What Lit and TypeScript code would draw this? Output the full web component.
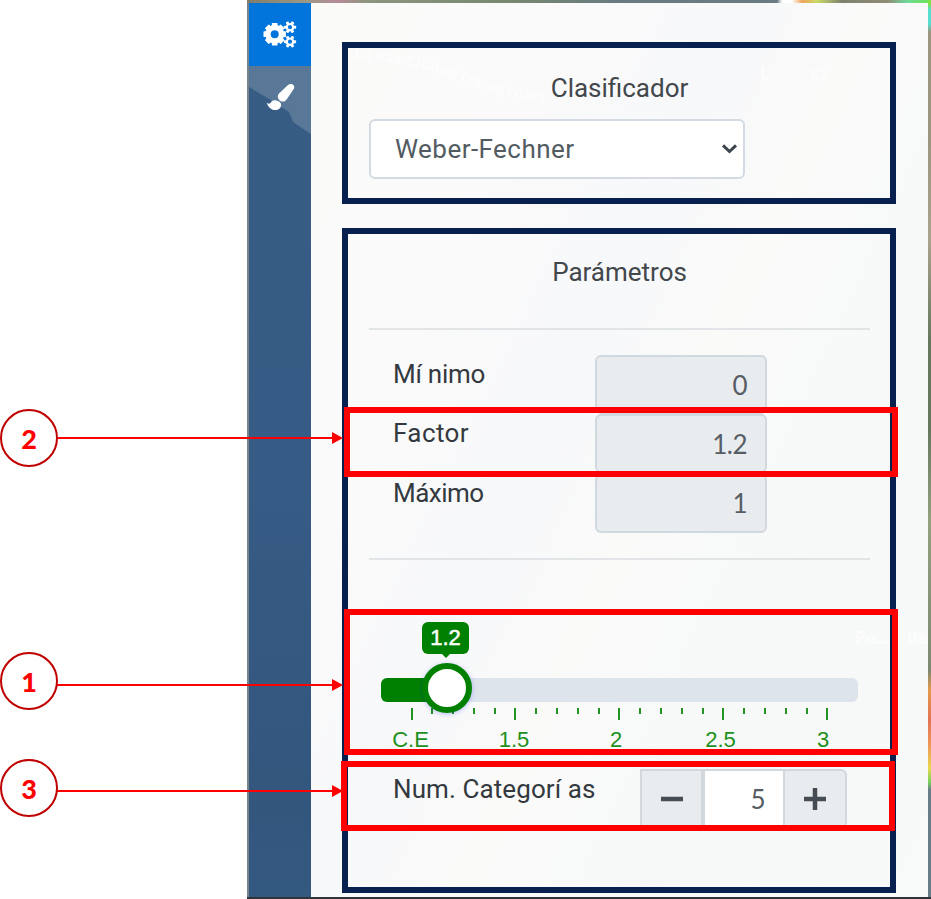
import { LitElement, html, svg, css } from "lit";
import { customElement } from "lit/decorators.js";
import { classMap } from "lit/directives/class-map.js";
import { styleMap } from "lit/directives/style-map.js";

const rows = [
  { label: "Mí nimo", value: "0", spacing: "-.25px" },
  { label: "Factor", value: "1.2", spacing: ".4px" },
  { label: "Máximo", value: "1", spacing: "-.5px" },
];
const ticks = Array.from({ length: 21 }, (_, i) => i);
const tickLabels = [
  { text: "C.E", x: 29.5 },
  { text: "1.5", x: 133 },
  { text: "2", x: 235 },
  { text: "2.5", x: 339.5 },
  { text: "3", x: 442 },
];
const callouts = [
  { n: 2, top: 408.5, line: 28.5, box: { left: 344, top: 407, width: 554, height: 70 } },
  { n: 1, top: 652, line: 32, box: { left: 344, top: 609, width: 554, height: 146 } },
  { n: 3, top: 758.5, line: 31.5, box: { left: 341, top: 761, width: 554, height: 70 } },
];

const gear = (cx: number, cy: number, r: number, hole: number, count: number, turn: number) => {
  const teeth = Array.from({ length: count }, (_, i) => turn + (i * 360) / count);
  return svg`<g transform="translate(${cx} ${cy})">
    <circle r=${(r + hole) / 2 - 0.6} fill="none" stroke="#fff" stroke-width=${r - hole - 1.2}></circle>
    ${teeth.map((a) => svg`<rect x=${-r * 0.27} y=${-r - 0.6} width=${r * 0.54} height=${r * 0.42} rx=".6" fill="#fff" transform="rotate(${a})"></rect>`)}
  </g>`;
};

@customElement("app-root")
export class AppRoot extends LitElement {
  static styles = css`
    :host { display: block; position: relative; width: 931px; height: 899px; overflow: hidden; background: #fff; font-family: Roboto, "Noto Sans", sans-serif; font-size: 26px; color: #42474c; }
    * { box-sizing: border-box; }
    .map { margin-left: 247px; height: 899px; padding: 3px 3px 2px 2px; display: flex;
      background:
        linear-gradient(#30353a, #30353a) 0 100% / 100% 2px no-repeat,
        linear-gradient(#80e048 0 4px, #55dfd0 10px 24px, #9c967f 32px 140px, #aaa38b 240px, #66795f 340px 430px, #93a17f 520px, #7d8971 670px, #e49a4c 690px, #e37455 720px, #ef9857 745px, #e9d84d 768px, #78d35b 782px, #677e88 790px) 100% 0 / 3px 100% no-repeat,
        linear-gradient(90deg, #817d6b, #9c9a86 60px, #b78a98 90px, #8c957e 120px, #78886f 260px, #687b81 370px 530px, #fff 535px 545px, #eea65d 555px, #cbd966 570px, #7c8270 595px, #918b75 640px, #70d799 660px, #70e553) 0 0 / 100% 3px no-repeat,
        #77858a; }
    .rail { width: 62px; display: flex; flex-direction: column; background: linear-gradient(#375d85, #365b84 55%, #33567d 90%, #345981); }
    .tab { height: 63px; width: 62px; background: #0275dc; }
    .coast { height: 70px; }
    .tab svg, .coast svg { display: block; }
    .panel { position: relative; flex: 1; padding: 39px 32px 0 31px; display: flex; flex-direction: column; gap: 24px;
      background: linear-gradient(115deg, #fafaf9, #fafafa 25%, #f7f8fa 42%, #fafaf9 54%, #f7f9f9 70%, #f8f9f9); }
    .ghost { position: absolute; left: 0; top: 0; opacity: .65; }
    .card { position: relative; border: 6px solid #08204f; width: 554px; padding: 0 20px 0 21px; display: flex; flex-direction: column; }
    .first { height: 162px; padding-top: 25px; }
    .second { height: 665px; padding-top: 23px; }
    .title { height: 30px; line-height: 30px; text-align: center; }
    .select { margin-top: 16px; width: 376px; height: 60px; border: 2px solid #d3dae1; border-radius: 6px; background: #fff; display: flex; align-items: center; justify-content: space-between; padding: 0 5px 0 24px; color: #535b62; letter-spacing: .45px; }
    .rule { height: 2px; background: #e2e5e7; flex: none; }
    .r1 { margin-top: 41px; }
    .fields { margin-top: 25px; height: 178px; display: grid; grid-auto-rows: 59.3px; }
    .field { display: grid; grid-template-columns: 202px 172px; padding-left: 24px; }
    .label { line-height: 30px; padding-top: 4px; white-space: nowrap; color: #34393f; }
    .value { border: 2px solid #d1d8de; border-radius: 6px; background: #e8ecef; display: flex; align-items: center; justify-content: flex-end; padding-right: 18px; color: #565d64; height: 59px; }
    .value, .num { font-family: Lato, sans-serif; font-size: 26px; letter-spacing: -.5px; }
    .r2 { margin-top: 25px; }
    .slider { margin: 61px 0 0 12px; width: 477px; height: 136px; flex: none; font-family: "Liberation Sans", Arial, sans-serif; }
    .track { position: relative; margin-top: 57px; height: 24px; border-radius: 6px; background: #dee4ec; }
    .fill { width: 60px; height: 24px; background: #008000; border-radius: 6px 0 0 6px; }
    .knob { position: absolute; left: 41px; top: -15px; width: 50px; height: 50px; border: 6px solid #008000; border-radius: 50%; background: #fff; box-shadow: 0 1px 5px rgba(0, 0, 255, .25); z-index: 2; }
    .tag { position: absolute; left: 41px; top: -56px; width: 47px; height: 32px; line-height: 31px; border-radius: 6px; background: #008000; color: #fff; font-size: 22px; -webkit-text-stroke: .5px #fff; text-align: center; }
    .tag::after { content: ""; position: absolute; left: 19px; top: 31px; border: 5px solid transparent; border-top-color: #008000; border-bottom: 0; }
    .ticks { display: flex; gap: 18.8px; padding: 6px 0 0 29.5px; height: 20px; }
    .tick { width: 2px; height: 6px; background: #239323; flex: none; }
    .tick.major { height: 12px; }
    .scale { position: relative; height: 30px; color: #209020; font-size: 22px; }
    .mark { position: absolute; top: 5px; line-height: 26px; transform: translateX(-50%); }
    .count { display: flex; padding-left: 24px; margin-top: 12px; }
    .count .label { width: 247px; padding-top: 5px; letter-spacing: .1px; }
    .btn, .num { height: 60px; border: 2px solid #d1d8de; background: #e8ecef; display: flex; align-items: center; }
    .btn { width: 63px; justify-content: center; }
    .plus { width: 62px; border-left: 0; border-radius: 0 6px 6px 0; }
    .num { width: 82px; background: #fff; justify-content: flex-end; padding-right: 18px; color: #565d64; }
    .disc { position: absolute; left: 0; width: 58px; height: 58px; border: 2px solid #c00000; border-radius: 50%; color: #f00; font: 900 27px/55px Lato, sans-serif; text-align: center; background: #fff; }
    .arrow { position: absolute; left: 55px; width: 288px; height: 12px; }
    .box { position: absolute; border: 6px solid #f00; }
  `;

  render() {
    return html`
      <div class="map">
        <div class="rail">
          <div class="tab">
            <svg width="62" height="63" viewBox="0 0 62 63">${gear(25.7, 31.2, 10.6, 4, 8, 0)}${gear(41, 24.2, 5.5, 2.1, 6, 30)}${gear(41, 38.7, 5.5, 2.1, 6, 30)}</svg>
          </div>
          <div class="coast">
            <svg width="62" height="70" viewBox="0 0 62 70">
              <path d="M0 0h62v68L44 56 40 46 20 33 0 21Z" fill="#597898"></path>
              <path d="M39 19C42 16.500 46.500 19 45 22.500L38 33C36 36 33 36.500 30.200 34 28 31.500 28.500 29 30.500 27Z" fill="#fff"></path>
              <path d="M27.500 34.600C31.500 35.600 33.200 38 31.500 41.400 28 46 20.500 45 17.500 36.500c2 1.700 3.400 1.400 4.400 0 1.200-2 3-2.800 5.600-1.900Z" fill="#fff"></path>
            </svg>
          </div>
        </div>
        <main class="panel">
          <svg class="ghost" width="617" height="894" viewBox="0 0 617 894">
            <defs><path id="road" d="M43 55Q105 61 145 77T280 107"></path></defs>
            <g fill="#fff" font-family="Open Sans" font-weight="700" font-size="17">
              <text font-size="15"><textPath href="#road">La Paz-Ciudad Insurgentes</textPath></text>
              <text x="449" y="77">L</text><text x="498" y="77">az</text>
              <text x="544" y="641">Pe...</text><text x="596" y="641">de</text>
            </g>
          </svg>
          <section class="card first">
            <div class="title">Clasificador</div>
            <div class="select"><span>Weber-Fechner</span>
              <svg width="17" height="12" viewBox="0 0 17 12"><path d="M2 2.300 8.500 8.500 15 2.300" fill="none" stroke="#3d454d" stroke-width="3"></path></svg>
            </div>
          </section>
          <section class="card second">
            <div class="title">Parámetros</div>
            <div class="rule r1"></div>
            <div class="fields">
              ${rows.map((r) => html`<div class="field"><span class="label" style=${styleMap({ letterSpacing: r.spacing })}>${r.label}</span><span class="value">${r.value}</span></div>`)}
            </div>
            <div class="rule r2"></div>
            <div class="slider">
              <div class="track"><div class="fill"></div><div class="knob"></div><div class="tag">1.2</div></div>
              <div class="ticks">${ticks.map((i) => html`<i class=${classMap({ tick: true, major: i % 5 === 0 })}></i>`)}</div>
              <div class="scale">${tickLabels.map((t) => html`<span class="mark" style=${styleMap({ left: `${t.x}px` })}>${t.text}</span>`)}</div>
            </div>
            <div class="count">
              <span class="label">Num. Categorí as</span>
              <span class="btn"><svg width="24" height="24"><path d="M1 12h22" stroke="#454c54" stroke-width="4.500"></path></svg></span>
              <span class="num">5</span>
              <span class="btn plus"><svg width="24" height="24"><path d="M1 12h22M12 1v22" stroke="#454c54" stroke-width="4.500"></path></svg></span>
            </div>
          </section>
        </main>
      </div>
      ${callouts.map((c) => html`
        <div class="box" style=${styleMap({ left: `${c.box.left}px`, top: `${c.box.top}px`, width: `${c.box.width}px`, height: `${c.box.height}px` })}></div>
        <svg class="arrow" style=${styleMap({ top: `${c.top + c.line - 5}px` })} viewBox="0 0 288 12"><path d="M2 5h276v2H2ZM277 0l11 6-11 6Z" fill="#f00"></path></svg>
        <div class="disc" style=${styleMap({ top: `${c.top}px` })}>${c.n}</div>`)}
    `;
  }
}
